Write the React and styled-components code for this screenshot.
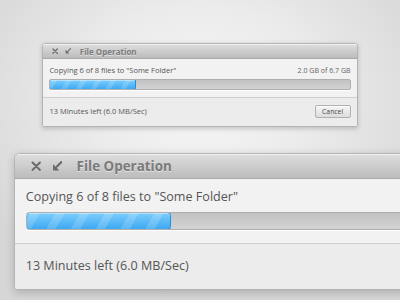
import React from "react";
import styled, { createGlobalStyle } from "styled-components";

const Global = createGlobalStyle`
  html, body {
    margin: 0;
    padding: 0;
  }
  body {
    font-family: "Open Sans", "DejaVu Sans", sans-serif;
  }
`;

const Stage = styled.div`
  position: relative;
  width: 400px;
  height: 300px;
  overflow: hidden;
  background: radial-gradient(
    ellipse 260px 200px at 200px 95px,
    #f7f7f7 0%,
    #ebebeb 45%,
    #d6d6d6 100%
  );
`;

// every size inside the window is in em, so one prop scales the whole thing
const Window = styled.div`
  position: absolute;
  left: ${(p) => p.$x}px;
  top: ${(p) => p.$y}px;
  font-size: ${(p) => p.$unit}px;
  width: 39.25em;
  border: 1px solid #b4b4b4;
  border-radius: 0.4em 0.4em 0.2em 0.2em;
  overflow: hidden;
  box-shadow: 0 0.15em 0.6em rgba(0, 0, 0, 0.18);
  background: #f2f2f2;
`;

const TitleBar = styled.div`
  height: 1.8em;
  display: flex;
  align-items: center;
  padding-left: 0.8em;
  background: linear-gradient(#dedede, #bcbcbc);
  border-bottom: 1px solid #a9a9a9;
  box-shadow: inset 0 1px 0 rgba(255, 255, 255, 0.6);
`;

const IconBtn = styled.span`
  width: 1.5em;
  margin-right: ${(p) => p.$gap}em;
  display: flex;
  align-items: center;
  justify-content: center;
  svg {
    width: 0.78em;
    height: 0.78em;
    display: block;
  }
`;

const Title = styled.div`
  margin-left: 0.4em;
  font-size: 1em;
  font-weight: 700;
  color: #7a7a7a;
  text-shadow: 0 1px 0 rgba(255, 255, 255, 0.5);
`;

const Body = styled.div`
  padding: 0.7em 0.8em 0.95em;
  border-bottom: 1px solid #cfcfcf;
  box-shadow: 0 1px 0 #fafafa;
`;

const InfoRow = styled.div`
  display: flex;
  align-items: baseline;
  justify-content: space-between;
  height: 1.3em;
  margin-bottom: 0.45em;
`;

const Label = styled.span`
  font-size: 0.94em;
  color: #555;
  white-space: nowrap;
`;

const Amount = styled.span`
  font-size: 0.88em;
  color: #666;
`;

const Track = styled.div`
  height: 1.35em;
  box-sizing: border-box;
  border: 1px solid #aeaeae;
  border-radius: 0.25em;
  background: linear-gradient(#c2c2c2, #d3d3d3);
  box-shadow: 0 1px 0 #ffffff;
  overflow: hidden;
`;

const Fill = styled.div`
  box-sizing: border-box;
  margin: -1px 0 0 -1px;
  height: calc(100% + 2px);
  border: 1px solid #1f8fe3;
  border-radius: 0.25em;
  background:
    repeating-linear-gradient(
      -60deg,
      rgba(255, 255, 255, 0) 0 1em,
      rgba(255, 255, 255, 0.16) 1em 1.6em
    ),
    linear-gradient(#7ccdfc, #3ea9f2);
  box-shadow: inset 0 1px 0 rgba(255, 255, 255, 0.4);
`;

const Footer = styled.div`
  height: 3.25em;
  display: flex;
  align-items: center;
  justify-content: space-between;
  padding: 0 0.8em 0.15em;
  background: #ececec;
`;

const Cancel = styled.button`
  font-family: inherit;
  font-size: 0.85em;
  color: #444;
  width: 5.3em;
  height: 2em;
  padding: 0;
  border: 1px solid #b0b0b0;
  border-radius: 0.3em;
  background: linear-gradient(#f6f6f6, #dcdcdc);
  box-shadow: inset 0 1px 0 #ffffff;
`;

const CloseIcon = () => (
  <svg viewBox="0 0 10 10">
    <path
      d="M1.5 1.5 L8.5 8.5 M8.5 1.5 L1.5 8.5"
      stroke="#6a6a6a"
      strokeWidth="2"
      strokeLinecap="round"
    />
  </svg>
);

const MinimizeIcon = () => (
  <svg viewBox="0 0 10 10">
    <path d="M9 1 L4.5 5.5" stroke="#6a6a6a" strokeWidth="2" strokeLinecap="round" />
    <path d="M1 3 V9 H7 Z" fill="#6a6a6a" />
  </svg>
);

const CopyWindow = ({ x, y, unit, progress, showAmount, showCancel }) => (
  <Window $x={x} $y={y} $unit={unit}>
    <TitleBar>
      <IconBtn $gap={0.1}>
        <CloseIcon />
      </IconBtn>
      <IconBtn $gap={0.3}>
        <MinimizeIcon />
      </IconBtn>
      <Title>File Operation</Title>
    </TitleBar>
    <Body>
      <InfoRow>
        <Label>Copying 6 of 8 files to "Some Folder"</Label>
        {showAmount && <Amount>2.0 GB of 6.7 GB</Amount>}
      </InfoRow>
      <Track>
        <Fill style={{ width: progress + "%" }} />
      </Track>
    </Body>
    <Footer>
      <Label>13 Minutes left (6.0 MB/Sec)</Label>
      {showCancel && <Cancel>Cancel</Cancel>}
    </Footer>
  </Window>
);

export default function App() {
  return (
    <Stage>
      <Global />
      <CopyWindow x={42} y={43} unit={8} progress={29} showAmount showCancel />
      {/* zoomed-in view of the same dialog; its right side runs past the frame */}
      <CopyWindow x={14} y={153} unit={13.4} progress={29} />
    </Stage>
  );
}
